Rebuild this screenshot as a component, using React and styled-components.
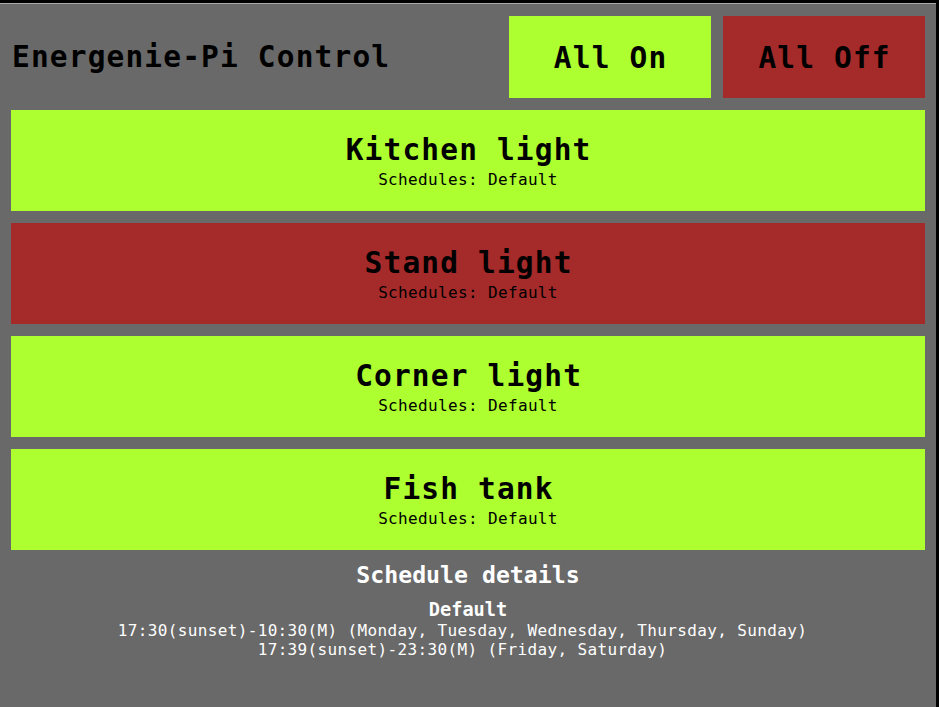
import React from "react";
import styled, { createGlobalStyle } from "styled-components";

const GlobalStyle = createGlobalStyle`
  html, body {
    margin: 0;
    padding: 0;
    background: #000;
    height: 100%;
  }
  #root { height: 100%; }
`;

const Screen = styled.div`
  box-sizing: border-box;
  width: 936px;
  min-height: calc(100vh - 3px);
  margin-top: 3px;
  border-top: 1px solid #a9a9a9;
  background: #696969;
  padding: 12px 11px 12px 11px;
  display: flex;
  flex-direction: column;
  gap: 12px;
  font-family: "DejaVu Sans Mono", monospace;
  color: #000;
`;

const Header = styled.header`
  display: flex;
  align-items: center;
  gap: 12px;
  height: 82px;
`;

const Title = styled.h1`
  flex: 1;
  margin: 0;
  padding: 1px 0 0 1px;
  font-size: 29.5px;
  letter-spacing: 1.15px;
  font-weight: bold;
  line-height: 81px;
  white-space: nowrap;
`;

const MasterButton = styled.button`
  width: 202px;
  height: 82px;
  border: none;
  margin: 0;
  padding: 1px 0 0 1.2px;
  background: ${(p) => (p.$on ? "#adff2f" : "#a52a2a")};
  font-family: "DejaVu Sans Mono", monospace;
  font-size: 29.5px;
  letter-spacing: 1.15px;
  font-weight: bold;
  color: #000;
  cursor: pointer;
`;

const SocketRow = styled.div`
  box-sizing: border-box;
  height: 101px;
  padding-top: 20px;
  background: ${(p) => (p.$on ? "#adff2f" : "#a52a2a")};
  display: flex;
  flex-direction: column;
  align-items: center;
`;

const SocketName = styled.div`
  padding-left: 1.2px;
  font-size: 29.5px;
  letter-spacing: 1.15px;
  font-weight: bold;
  line-height: 40px;
`;

const SocketSchedules = styled.div`
  font-size: 16px;
  letter-spacing: 0.35px;
  line-height: 20px;
`;

const Details = styled.section`
  display: flex;
  flex-direction: column;
  align-items: center;
  color: #fff;
`;

const DetailsHeading = styled.h2`
  margin: 0;
  font-size: 23.2px;
  font-weight: bold;
  line-height: 26px;
`;

const ScheduleName = styled.h3`
  margin: 11px 0 0;
  font-size: 18.6px;
  font-weight: bold;
  line-height: 22px;
`;

const ScheduleLine = styled.div`
  padding-right: 11px;
  font-size: 16px;
  letter-spacing: 0.36px;
  line-height: 19px;
  white-space: nowrap;
`;

const sockets = [
  { name: "Kitchen light", on: true },
  { name: "Stand light", on: false },
  { name: "Corner light", on: true },
  { name: "Fish tank", on: true },
];

export default function App() {
  return (
    <>
      <GlobalStyle />
      <Screen>
        <Header>
          <Title>Energenie-Pi Control</Title>
          <MasterButton $on>All On</MasterButton>
          <MasterButton>All Off</MasterButton>
        </Header>
        {sockets.map((s) => (
          <SocketRow key={s.name} $on={s.on}>
            <SocketName>{s.name}</SocketName>
            <SocketSchedules>Schedules: Default</SocketSchedules>
          </SocketRow>
        ))}
        <Details>
          <DetailsHeading>Schedule details</DetailsHeading>
          <ScheduleName>Default</ScheduleName>
          <ScheduleLine>
            17:30(sunset)-10:30(M) (Monday, Tuesday, Wednesday, Thursday, Sunday)
          </ScheduleLine>
          <ScheduleLine>17:39(sunset)-23:30(M) (Friday, Saturday)</ScheduleLine>
        </Details>
      </Screen>
    </>
  );
}
